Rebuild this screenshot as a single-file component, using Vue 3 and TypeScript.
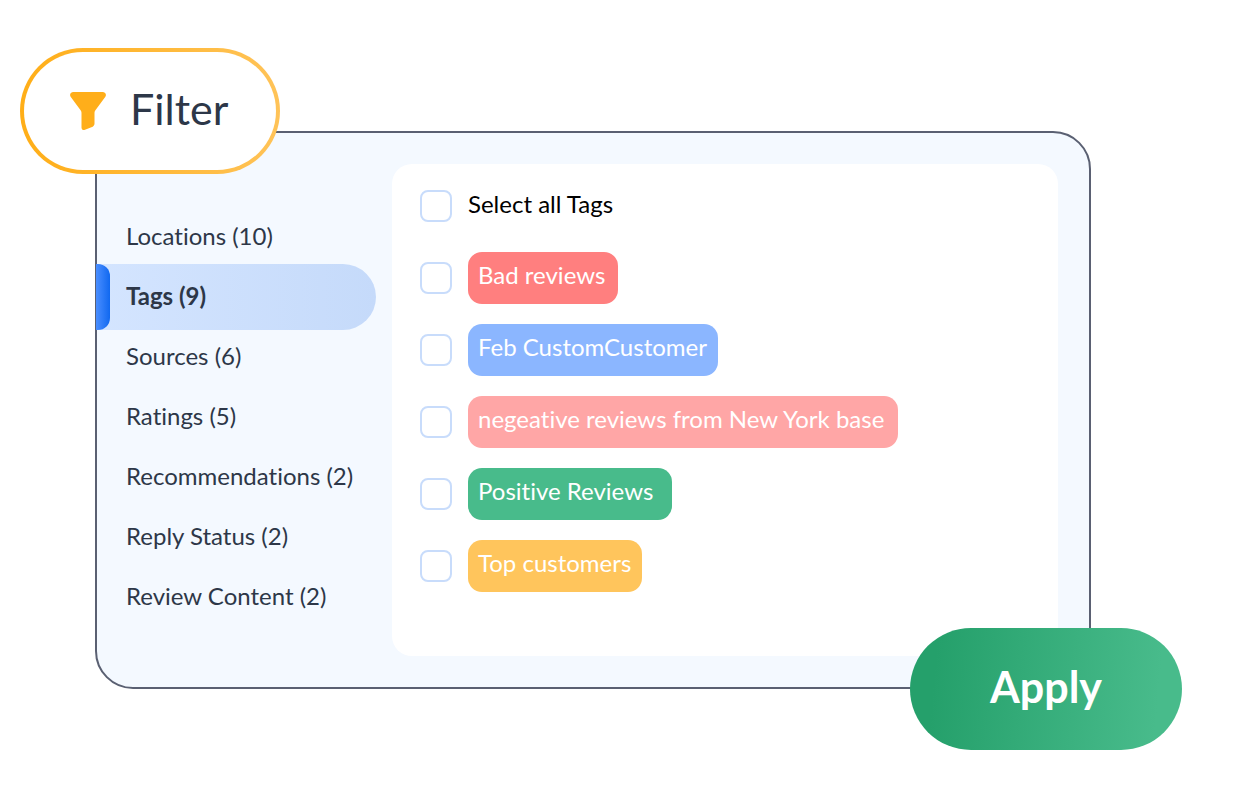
<script setup lang="ts">
import { ref } from 'vue'

interface Category {
  name: string
  count: number
}

interface Tag {
  name: string
  tone: string
  width: number
  checked: boolean
}

const categories: Category[] = [
  { name: 'Locations', count: 10 },
  { name: 'Tags', count: 9 },
  { name: 'Sources', count: 6 },
  { name: 'Ratings', count: 5 },
  { name: 'Recommendations', count: 2 },
  { name: 'Reply Status', count: 2 },
  { name: 'Review Content', count: 2 },
]

const active = ref('Tags')

const tags = ref<Tag[]>([
  { name: 'Bad reviews', tone: 'red', width: 150, checked: false },
  { name: 'Feb CustomCustomer', tone: 'blue', width: 250, checked: false },
  { name: 'negeative reviews from New York base', tone: 'pink', width: 430, checked: false },
  { name: 'Positive Reviews', tone: 'green', width: 204, checked: false },
  { name: 'Top customers', tone: 'amber', width: 174, checked: false },
])

const allChecked = ref(false)

function toggleAll(): void {
  tags.value.forEach((tag) => (tag.checked = allChecked.value))
}
</script>

<template>
  <main class="page">
    <section class="panel">
      <nav class="sidebar" aria-label="Filter categories">
        <button
          v-for="category in categories"
          :key="category.name"
          type="button"
          class="category"
          :class="{ active: category.name === active }"
          @click="active = category.name"
        >
          {{ category.name }} ({{ category.count }})
        </button>
      </nav>

      <div class="card">
        <div class="row">
          <input id="tag-all" v-model="allChecked" type="checkbox" class="check" @change="toggleAll" />
          <label for="tag-all" class="all">Select all Tags</label>
        </div>
        <div v-for="(tag, index) in tags" :key="tag.name" class="row">
          <input :id="`tag-${index}`" v-model="tag.checked" type="checkbox" class="check" />
          <label
            :for="`tag-${index}`"
            class="chip"
            :class="tag.tone"
            :style="{ minWidth: `${tag.width}px` }"
          >{{ tag.name }}</label>
        </div>
      </div>

      <button type="button" class="filter">
        <svg class="funnel" viewBox="0 0 36 38" aria-hidden="true">
          <path
            d="M3.4 0H32.6C35.6 0 36.8 2.8 35.2 5L25.4 18.2C24.8 19 24.5 19.8 24.5 20.8V31.6C24.5 33 23.9 34 22.7 34.7L15 37.7C13 38.5 11.5 37.4 11.5 35.4V20.8C11.5 19.8 11.2 19 10.6 18.2L.8 5C-.8 2.8 .4 0 3.4 0Z"
          />
        </svg>
        <span class="filter-label">Filter</span>
      </button>

      <button type="button" class="apply">Apply</button>
    </section>
  </main>
</template>

<style>
body {
  margin: 0;
  background: #fff;
}
</style>

<style scoped>
.page {
  box-sizing: border-box;
  padding: 131px 145px 111px 95px;
  font-family: Lato, 'Open Sans', sans-serif;
  font-size: 24px;
  font-variant-ligatures: none;
  line-height: 30px;
  color: #2d3748;
}

button {
  border: 0;
  background: none;
  font: inherit;
  font-variant-ligatures: none;
  color: inherit;
  cursor: pointer;
}

.panel {
  position: relative;
  display: grid;
  grid-template-columns: 295px 1fr;
  padding: 31px 31px 31px 0;
  border: 2px solid #5a6072;
  border-radius: 38px;
  background: #f4f9ff;
}

.sidebar {
  display: flex;
  flex-direction: column;
  padding: 43px 16px 29px 0;
}

.category {
  height: 60px;
  padding: 0 0 2px 29px;
  text-align: left;
  white-space: nowrap;
}

.category.active {
  position: relative;
  height: 66px;
  margin: -3px 0 -3px -1px;
  padding-left: 30px;
  border-radius: 0 33px 33px 0;
  background: linear-gradient(90deg, #d4e5ff, #c5dafa);
  font-weight: 700;
}

.category.active::before {
  content: '';
  position: absolute;
  inset: 0 auto 0 0;
  width: 14px;
  border-radius: 0 12px 12px 0;
  background: linear-gradient(90deg, #4a8eff, #1068f0);
}

.card {
  display: flex;
  flex-direction: column;
  gap: 20px;
  min-width: 0;
  padding: 16px 28px 64px;
  border-radius: 20px;
  background: #fff;
}

.row {
  display: flex;
  align-items: center;
  gap: 16px;
  height: 52px;
}

.check {
  appearance: none;
  flex: none;
  box-sizing: border-box;
  width: 32px;
  height: 32px;
  margin: 0;
  border: 2px solid #c8dcfb;
  border-radius: 8px;
  background: #fff;
}

.check:checked {
  background: #8bb6ff;
}

.all {
  padding-bottom: 5px;
  color: #000;
}

.chip {
  box-sizing: border-box;
  height: 52px;
  padding: 8px 10px;
  border-radius: 14px;
  color: #fff;
  white-space: nowrap;
}

.red {
  background: #ff7f7f;
}

.blue {
  background: #8bb6ff;
}

.pink {
  background: #ffa6a6;
}

.green {
  background: #48bb8b;
}

.amber {
  background: #ffc55c;
}

.filter {
  position: absolute;
  top: -85px;
  left: -77px;
  display: flex;
  align-items: center;
  gap: 24px;
  box-sizing: border-box;
  width: 260px;
  height: 126px;
  padding: 0 0 0 46px;
  border: 4px solid transparent;
  border-radius: 63px;
  background:
    linear-gradient(#fff, #fff) padding-box,
    linear-gradient(90deg, #ffae17, #ffc358) border-box;
  font-size: 43px;
  line-height: 52px;
}

.filter-label {
  padding-bottom: 4px;
}

.funnel {
  flex: none;
  width: 36px;
  height: 38px;
  fill: #ffae1a;
}

.apply {
  position: absolute;
  right: -93px;
  bottom: -63px;
  width: 272px;
  height: 122px;
  padding: 0 0 4px;
  border-radius: 61px;
  background: linear-gradient(95deg, #25a06b 10%, #48bb8b 90%);
  font-size: 43px;
  font-weight: 700;
  line-height: 52px;
  color: #fff;
}
</style>
